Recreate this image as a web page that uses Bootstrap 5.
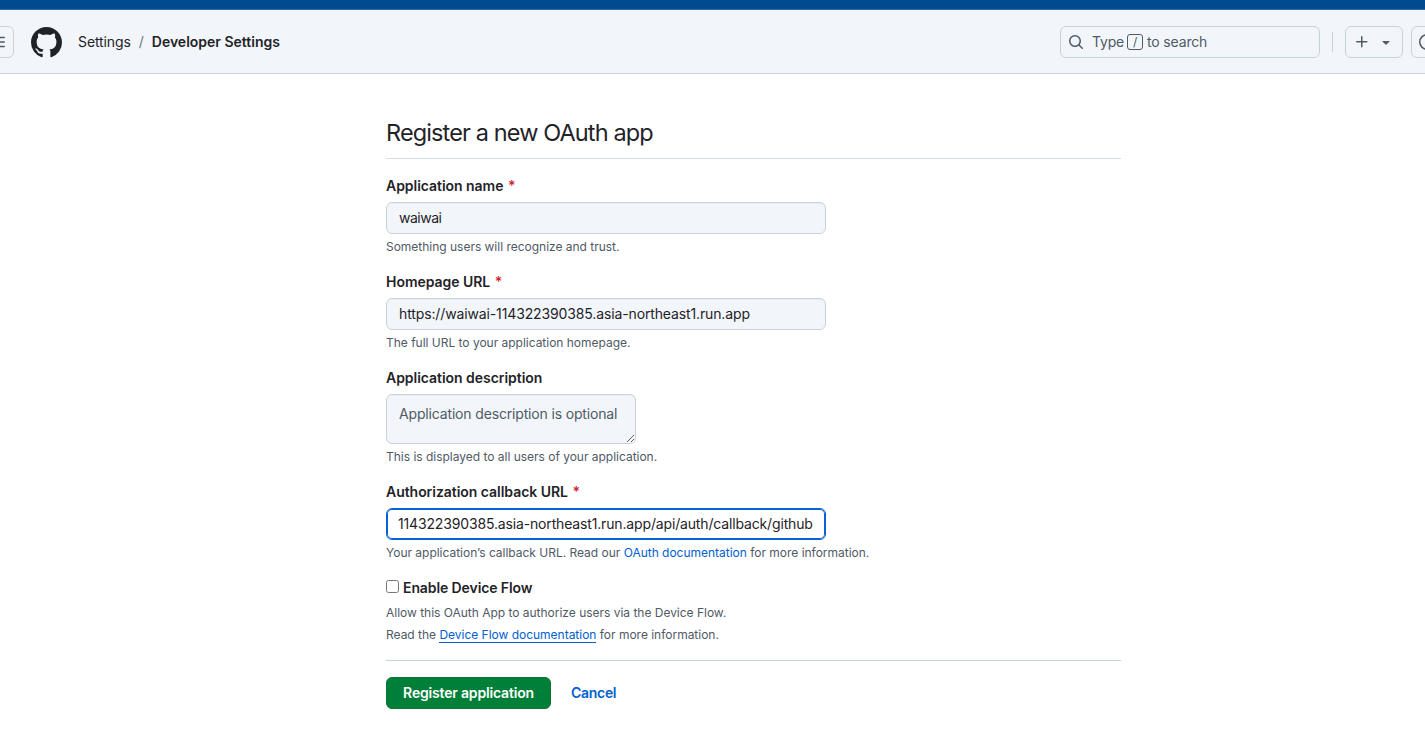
<!DOCTYPE html>
<html lang="en">
<head>
<meta charset="utf-8">
<meta name="viewport" content="width=device-width, initial-scale=1">
<title>Register a new OAuth app</title>
<link href="https://cdn.jsdelivr.net/npm/bootstrap@5.3.0/dist/css/bootstrap.min.css" rel="stylesheet">
<style>
  body { font-family: Inter, "Liberation Sans", sans-serif; font-size: 14px; line-height: 20px; color: #1f2328; background: #fff; overflow: hidden; letter-spacing: -.1px; }
  .top-strip { height: 10px; background: #004a8f; border-bottom: 1px solid #2a6cad; }
  .app-header { height: 64px; background: #f2f6fa; border-bottom: 1px solid #c8d3d9; overflow: hidden; white-space: nowrap; }
  .box-btn { height: 32px; border: 1px solid #c8d3d9; border-radius: 6px; color: #4f5a66; flex: none; background: transparent; padding: 0; }
  .menu-btn { width: 32px; margin-left: -18px; }
  .logo { margin-left: 17px; margin-top: 1px; }
  .crumbs { margin-left: 16px; }
  .c2 { letter-spacing: 0; }
  .search { width: 260px; padding: 0 7px; letter-spacing: -.17px; }
  .key { width: 16px; height: 16px; border: 1px solid #4f5a66; border-radius: 3px; font-size: 12px; line-height: 14px; margin: 1px 4px 0 3px; }
  .rule-v { width: 1px; height: 20px; background: #c8d3d9; margin: 0 12px; }
  .plus-btn { width: 58px; padding: 0 8px; margin-right: 8px; }
  .page { width: 735px; margin-left: 386px; padding-top: 43px; }
  .page h1 { font-size: 23.5px; line-height: 32px; font-weight: 400; margin: 0 0 16px; padding-bottom: 9px; border-bottom: 1px solid #d5dee5; letter-spacing: -.88px; }
  .field { margin-bottom: 15px; }
  .form-label { display: block; font-weight: 600; margin: 0 0 6px; line-height: 21px; letter-spacing: -.04px; }
  .req { color: #d1242f; margin-left: 1px; }
  .form-control { width: 440px; height: 32px; border-color: #c8d3d9; border-radius: 6px; background: #f2f6fa; font-size: 14px; line-height: 20px; padding: 4px 12px 6px; color: #1f2328; letter-spacing: -.13px; box-shadow: inset 0 1px 0 #1f23280a; }
  .short-value { letter-spacing: -.5px; }
  textarea.form-control { width: 250px; height: 50px; min-height: 50px; padding: 9px 12px; overflow: hidden; display: block; letter-spacing: -.16px; }
  .form-control::placeholder { color: #4f5a66; opacity: 1; }
  .form-control.active-field { background: #fff; border-color: #0b62d6; box-shadow: inset 0 0 0 1px #0b62d6; padding-left: 11px; letter-spacing: -.155px; }
  .note { font-size: 12px; line-height: 18px; color: #4f5a66; margin: 4px 0 0; letter-spacing: -.015px; white-space: nowrap; }
  a { color: #0060d0; text-decoration: none; }
  .flow-group { padding-top: 1px; }
  .native-check { width: 13px; height: 13px; margin: 0 4px 3px 0; }
  .flow-row { margin-bottom: 6px; }
  .under { border-bottom: 1px solid #0060d0; }
  .actions { border-top: 1px solid #c8d3d9; margin-top: 16px; padding-top: 16px; }
  .cancel-link { margin-left: 20px; letter-spacing: -.3px; }
  .btn-register { width: 165px; height: 32px; padding: 0 0 1px; background: #007f38; color: #fff; font-size: 14px; line-height: 20px; font-weight: 600; letter-spacing: -.18px; border: 1px solid #0a7435; border-radius: 6px; }
</style>
</head>
<body>
<div class="top-strip"></div>
<header class="app-header d-flex align-items-center">
  <button class="box-btn menu-btn d-flex align-items-center justify-content-center" aria-label="Menu">
    <svg width="16" height="16" viewBox="0 0 16 16" fill="none" stroke="currentColor" stroke-width="1.5" stroke-linecap="round"><path d="M1.75 3.5h12.5M1.75 8h12.5M1.75 12.5h12.5"/></svg>
  </button>
  <svg class="logo flex-shrink-0" width="31" height="31" viewBox="0 0 16 16" fill="#1f2328"><path d="M8 0c4.42 0 8 3.58 8 8a8.013 8.013 0 0 1-5.45 7.59c-.4.08-.55-.17-.55-.38 0-.27.01-1.13.01-2.2 0-.75-.25-1.23-.54-1.48 1.78-.2 3.65-.88 3.65-3.95 0-.88-.31-1.59-.82-2.15.08-.2.36-1.02-.08-2.12 0 0-.67-.22-2.2.82-.64-.18-1.32-.27-2-.27-.68 0-1.36.09-2 .27-1.53-1.03-2.2-.82-2.2-.82-.44 1.1-.16 1.92-.08 2.12-.51.56-.82 1.28-.82 2.15 0 3.06 1.86 3.75 3.64 3.95-.23.2-.44.55-.51 1.07-.46.21-1.61.55-2.33-.66-.15-.24-.6-.83-1.23-.82-.67.01-.27.38.01.53.34.19.73.9.82 1.13.16.45.68 1.31 2.69.94 0 .67.01 1.3.01 1.49 0 .21-.15.45-.55.38A7.995 7.995 0 0 1 0 8c0-4.42 3.58-8 8-8Z"/></svg>
  <nav class="crumbs d-flex" aria-label="Breadcrumb">
    <span class="c1">Settings</span><span class="text-secondary mx-2">/</span><span class="c2 fw-semibold">Developer Settings</span>
  </nav>
  <div class="d-flex align-items-center ms-auto flex-shrink-0" style="margin-right:-18px">
    <div class="box-btn search d-flex align-items-center">
      <svg class="me-2" width="16" height="16" viewBox="0 0 16 16" fill="currentColor"><path d="M10.68 11.74a6 6 0 0 1-7.922-8.982 6 6 0 0 1 8.982 7.922l3.04 3.04a.749.749 0 0 1-.326 1.275.749.749 0 0 1-.734-.215ZM11.5 7a4.499 4.499 0 1 0-8.997 0A4.499 4.499 0 0 0 11.5 7Z"/></svg>
      <span>Type</span><span class="key text-center">/</span><span>to search</span>
    </div>
    <div class="rule-v"></div>
    <button class="box-btn plus-btn d-flex align-items-center justify-content-between" aria-label="Create">
      <svg width="16" height="16" viewBox="0 0 16 16" fill="currentColor"><path d="M7.75 2a.75.75 0 0 1 .75.75V7h4.25a.75.75 0 0 1 0 1.5H8.5v4.25a.75.75 0 0 1-1.5 0V8.5H2.75a.75.75 0 0 1 0-1.5H7V2.75A.75.75 0 0 1 7.75 2Z"/></svg>
      <svg width="16" height="16" viewBox="0 0 16 16" fill="currentColor"><path d="m4.427 7.427 3.396 3.396a.25.25 0 0 0 .354 0l3.396-3.396A.25.25 0 0 0 11.396 7H4.604a.25.25 0 0 0-.177.427Z"/></svg>
    </button>
    <button class="box-btn d-flex align-items-center justify-content-center" style="width:32px" aria-label="Issues">
      <svg width="16" height="16" viewBox="0 0 16 16" fill="none" stroke="currentColor" stroke-width="1.5"><circle cx="8" cy="8" r="7.25"/><circle cx="8" cy="8" r="1" fill="currentColor"/></svg>
    </button>
  </div>
</header>

<main class="page">
  <h1>Register a new OAuth app</h1>
  <form>
    <div class="field">
      <label class="form-label" for="name"><span>Application name</span> <span class="req">*</span></label>
      <input class="form-control short-value" id="name" value="waiwai">
      <p class="note">Something users will recognize and trust.</p>
    </div>
    <div class="field">
      <label class="form-label" for="home"><span>Homepage URL</span> <span class="req">*</span></label>
      <input class="form-control" id="home" value="https://waiwai-114322390385.asia-northeast1.run.app">
      <p class="note">The full URL to your application homepage.</p>
    </div>
    <div class="field">
      <label class="form-label" for="desc">Application description</label>
      <textarea class="form-control" id="desc" placeholder="Application description is optional"></textarea>
      <p class="note">This is displayed to all users of your application.</p>
    </div>
    <div class="field">
      <label class="form-label" for="callback"><span>Authorization callback URL</span> <span class="req">*</span></label>
      <input class="form-control active-field" id="callback" value="114322390385.asia-northeast1.run.app/api/auth/callback/github">
      <p class="note">Your application’s callback URL. Read our <a href="#">OAuth documentation</a> for more information.</p>
    </div>
    <div class="flow-group">
      <div class="flow-row d-flex align-items-center"><input class="native-check" type="checkbox" id="flow"><label class="fw-semibold" for="flow">Enable Device Flow</label></div>
      <p class="note">Allow this OAuth App to authorize users via the Device Flow.</p>
      <p class="note">Read the <a class="under" href="#">Device Flow documentation</a> for more information.</p>
    </div>
    <div class="actions d-flex align-items-center">
      <button class="btn btn-register" type="button">Register application</button>
      <a class="cancel-link fw-semibold" href="#">Cancel</a>
    </div>
  </form>
</main>
<script src="https://cdn.jsdelivr.net/npm/bootstrap@5.3.0/dist/js/bootstrap.bundle.min.js"></script>
</body>
</html>
